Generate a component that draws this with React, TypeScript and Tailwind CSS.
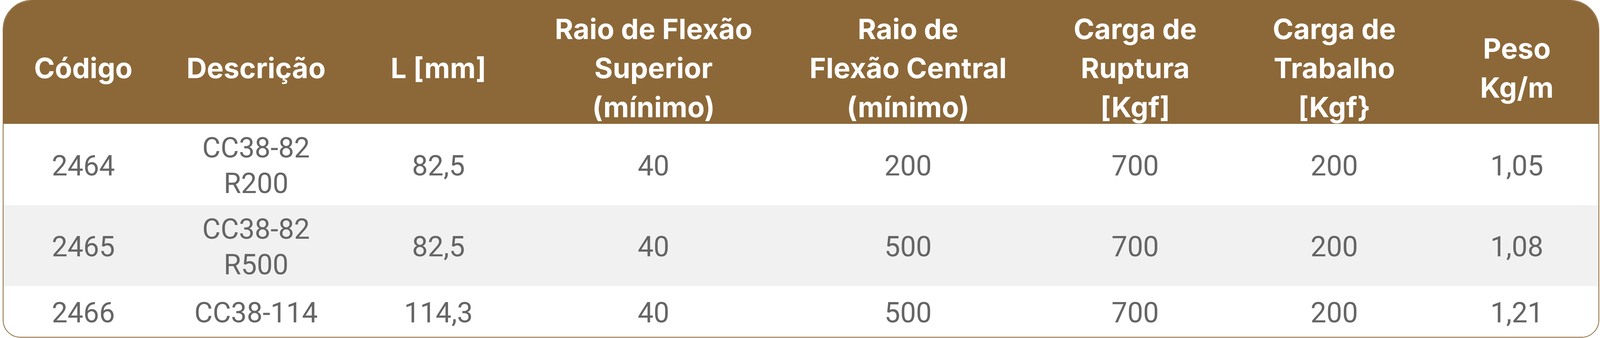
const headers: string[][] = [
  ["Código"],
  ["Descrição"],
  ["L [mm]"],
  ["Raio de Flexão", "Superior", "(mínimo)"],
  ["Raio de", "Flexão Central", "(mínimo)"],
  ["Carga de", "Ruptura", "[Kgf]"],
  ["Carga de", "Trabalho", "[Kgf}"],
  ["Peso", "Kg/m"],
];

type Row = { cells: string[][]; height: string; bg: string };

const rows: Row[] = [
  {
    cells: [["2464"], ["CC38-82", "R200"], ["82,5"], ["40"], ["200"], ["700"], ["200"], ["1,05"]],
    height: "h-[208px]",
    bg: "bg-white",
  },
  {
    cells: [["2465"], ["CC38-82", "R500"], ["82,5"], ["40"], ["500"], ["700"], ["200"], ["1,08"]],
    height: "h-[207px]",
    bg: "bg-[#f1f1f1]",
  },
  {
    cells: [["2466"], ["CC38-114"], ["114,3"], ["40"], ["500"], ["700"], ["200"], ["1,21"]],
    height: "h-[130px]",
    bg: "bg-white",
  },
];

// column widths taken from the reference, kept proportional so the table fills the window
const cols = "grid grid-cols-[450fr_522fr_504fr_706fr_726fr_552fr_568fr_459fr]";

export default function App() {
  return (
    <div className="h-[865px] w-full bg-white pr-[0.05%] pl-[0.16%]">
      <div className="w-full overflow-hidden rounded-t-[75px] rounded-b-[45px] border-2 border-[#8c6838]">
        <div className={`${cols} h-[315px] bg-[#8c6838] font-['Inter',sans-serif] text-[72px] leading-[100px] font-bold text-white`}>
          {headers.map((lines, i) => (
            <div key={i} className="flex flex-col items-center justify-center pt-[22px] text-center">
              {lines.map((l) => (
                <span key={l} className="whitespace-nowrap">
                  {l}
                </span>
              ))}
            </div>
          ))}
        </div>
        {rows.map((row, r) => (
          <div
            key={r}
            className={`${cols} ${row.height} ${row.bg} font-['Roboto',sans-serif] text-[72px] leading-[91px] text-[#656565]`}
          >
            {row.cells.map((lines, i) => (
              <div key={i} className="flex flex-col items-center justify-center pt-[6px] text-center">
                {lines.map((l) => (
                  <span key={l} className="whitespace-nowrap">
                    {l}
                  </span>
                ))}
              </div>
            ))}
          </div>
        ))}
      </div>
    </div>
  );
}
